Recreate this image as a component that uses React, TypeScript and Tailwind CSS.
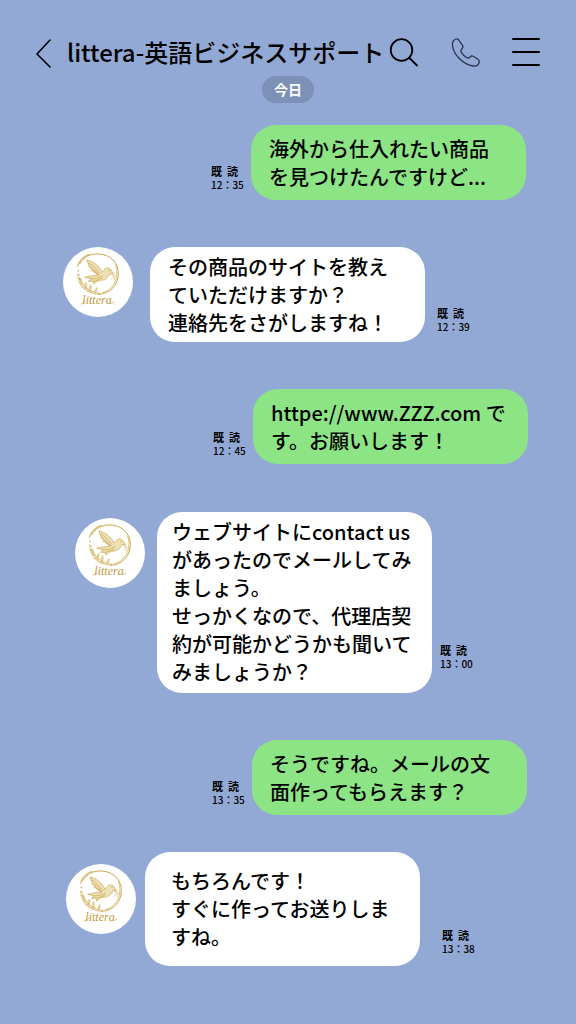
import React from 'react';

interface Message {
  text: string;
  time: string;
  mine?: boolean;
  rowClass: string;
  avatarClass?: string;
  bubbleClass: string;
  stampClass: string;
}

const messages: Message[] = [
  {
    text: '海外から仕入れたい商品\nを見つけたんですけど...',
    time: '12：35',
    mine: true,
    rowClass: 'mt-[22px] pr-[50px]',
    bubbleClass: 'px-[18px] pt-[10px] pb-[9px]',
    stampClass: 'mr-[6px] mb-[8px]',
  },
  {
    text: 'その商品のサイトを教え\nていただけますか？\n連絡先をさがしますね！',
    time: '12：39',
    rowClass: 'mt-[47px] pl-[63px]',
    avatarClass: 'mr-[17px]',
    bubbleClass: 'px-[18px] pt-[6px] pb-[5px]',
    stampClass: 'ml-[12px] mb-[8px]',
  },
  {
    text: 'httpe://www.ZZZ.com で\nす。お願いします！',
    time: '12：45',
    mine: true,
    rowClass: 'mt-[47px] pr-[48px]',
    bubbleClass: 'px-[18px] pt-[10px] pb-[9px]',
    stampClass: 'mr-[6px] mb-[6px]',
  },
  {
    text: 'ウェブサイトにcontact us\nがあったのでメールしてみ\nましょう。\nせっかくなので、代理店契\n約が可能かどうかも聞いて\nみましょうか？',
    time: '13：00',
    rowClass: 'mt-[48px] pl-[75px]',
    avatarClass: 'mr-[12px] mt-[6px]',
    bubbleClass: 'px-[15px] pt-[6px] pb-[7px]',
    stampClass: 'ml-[8px] mb-[22px]',
  },
  {
    text: 'そうですね。メールの文\n面作ってもらえます？',
    time: '13：35',
    mine: true,
    rowClass: 'mt-[47px] pr-[49px]',
    bubbleClass: 'px-[18px] pt-[10px] pb-[9px]',
    stampClass: 'mr-[6px] mb-[8px]',
  },
  {
    text: 'もちろんです！\nすぐに作ってお送りしま\nすね。',
    time: '13：38',
    rowClass: 'mt-[37px] pl-[66px]',
    avatarClass: 'mr-[9px] mt-[12px]',
    bubbleClass: 'px-[26px] pt-[15px] pb-[15px]',
    stampClass: 'ml-[22px] mb-[10px]',
  },
];

const Avatar: React.FC<{ className?: string }> = ({ className = '' }) => {
  return (
    <svg
      viewBox="0 0 210 210"
      className={`size-[70px] shrink-0 rounded-full bg-white ${className}`}
      fill="none"
      stroke="#c9a548"
      strokeLinecap="round"
      strokeLinejoin="round"
      role="img"
      aria-label="littera"
    >
      {/* Ring */}
      <path d="M50 50 C62 28 84 20 106 21 C142 22 166 47 166 80 C166 115 141 140 107 142" strokeWidth="3" />
      <path d="M158 55 C170 90 154 126 119 137" strokeWidth="3" stroke="#dcc37c" />
      <path d="M107 142 C68 140 43 113 44 80" strokeWidth="2" />
      <path d="M43 58 C49 41 62 29 77 22" strokeWidth="4" stroke="#d8bd74" />
      <path d="M46 70 v1 M48 84 v1 M51 96 v1" strokeWidth="4" />

      {/* Leaves */}
      <g fill="#e6d29a" stroke="#d4b562" strokeWidth="1">
        <path d="M55 106 C50 100 48 96 49 91 C55 95 58 100 55 106 Z" />
        <path d="M62 115 C54 113 51 110 48 104 C56 105 61 109 62 115 Z" />
        <path d="M68 121 C65 113 66 109 70 104 C74 110 73 116 68 121 Z" />
        <path d="M73 126 C64 127 59 123 56 118 C64 118 70 120 73 126 Z" />
        <path d="M81 131 C77 123 78 118 83 112 C87 119 87 125 81 131 Z" />
        <path d="M88 136 C79 138 73 135 68 130 C76 128 83 130 88 136 Z" />
        <path d="M96 138 C94 131 97 126 102 121 C105 128 102 134 96 138 Z" />
      </g>
      <path d="M49 92 C60 117 80 135 110 139" strokeWidth="2" />

      {/* Dove */}
      <path
        d="M107 84 C91 76 77 61 72 39 C90 43 109 56 117 76 C121 70 128 61 136 63 C143 64 145 70 151 79 C143 78 140 81 136 88 C130 98 120 100 107 100 L92 111 L91 103 L76 103 L86 96 L65 91 C80 86 94 87 107 84 Z"
        fill="#efe1b6"
        strokeWidth="2"
      />
      <path d="M77 48 C89 54 101 65 109 79 M77 58 C88 63 99 71 105 81 M83 70 C91 72 98 77 103 82 M86 96 C98 95 109 93 119 87 M91 103 C102 100 110 97 117 93" strokeWidth="2" />
      <path d="M138 70 v1" strokeWidth="3" />
      <path d="M141 79 C149 82 154 89 155 98 M147 83 l7 -2 M151 88 l7 -1 M149 92 l-4 5" strokeWidth="2" stroke="#d8b872" />

      {/* Wordmark */}
      <text
        x="58"
        y="170"
        className="font-['Liberation_Serif',serif] text-[36px] italic"
        fill="#bf9a3c"
        stroke="none"
      >
        littera
      </text>
      <path d="M54 171 C60 171 65 167 69 162 M142 169 C146 169 149 168 152 166" strokeWidth="2" />
    </svg>
  );
};

const Stamp: React.FC<{ time: string; className: string }> = ({ time, className }) => {
  return (
    <div className={`w-[34px] shrink-0 self-end leading-[14px] whitespace-pre ${className}`}>
      <p className="text-[11px] font-bold">{'既  読'}</p>
      <p className="text-[10px] font-medium">{time}</p>
    </div>
  );
};

const MessageRow: React.FC<{ message: Message }> = ({ message }) => {
  const { text, time, mine, rowClass, avatarClass, bubbleClass, stampClass } = message;

  return (
    <li className={`flex items-start ${mine ? 'justify-end' : ''} ${rowClass}`}>
      {mine ? <Stamp time={time} className={stampClass} /> : <Avatar className={avatarClass} />}
      <p
        className={`w-[275px] rounded-[25px] text-[20px] leading-[28px] font-medium whitespace-pre ${
          mine ? 'bg-[#8de485]' : 'bg-white'
        } ${bubbleClass}`}
      >
        {text}
      </p>
      {!mine && <Stamp time={time} className={stampClass} />}
    </li>
  );
};

export default function App() {
  return (
    <div
      lang="ja"
      className="min-h-screen bg-[#93a9d5] pb-8 font-['Noto_Sans_CJK_JP',sans-serif] text-black"
    >
      {/* Header */}
      <header className="flex items-center pt-[34px] pr-[35px] pl-[35px]">
        <button type="button" aria-label="戻る" className="shrink-0">
          <svg viewBox="0 0 18 32" className="h-[32px] w-[18px]" fill="none" stroke="currentColor" strokeWidth="1.6" strokeLinecap="round" strokeLinejoin="round">
            <path d="M15 4 L2 18 L15 31" />
          </svg>
        </button>
        <h1 className="ml-[14px] text-[24px] leading-[36px] font-medium whitespace-nowrap">
          littera-英語ビジネスサポート
        </h1>
        <div className="ml-auto flex shrink-0 items-center gap-[31px]">
          <button type="button" aria-label="検索">
            <svg viewBox="0 0 30 30" className="size-[30px]" fill="none" stroke="currentColor" strokeWidth="1.8" strokeLinecap="round">
              <circle cx="12.500" cy="13" r="10.800" />
              <path d="M20.500 21 L28 28.500" />
            </svg>
          </button>
          <button type="button" aria-label="通話">
            <svg viewBox="0 0 30 30" className="size-[30px]" fill="none" stroke="#28324a" strokeWidth="1.3" strokeLinejoin="round">
              <path d="M6 2 C7.500 1.500 8.500 2.500 9.500 4 C10.500 6 12.500 7.500 13 9.500 C13.200 11 11 12.500 10.800 14 C10.800 16 16 21 18 21 C19.500 21 20.500 18.800 22 18.800 C23.500 18.800 25 20.500 27 21.500 C28.800 22.500 29.600 23.500 29.200 25.300 C28.500 28 26 29.200 23 29 C13.500 27.700 3.500 18 2.500 8.500 C2.200 5.500 3.500 3 6 2 Z" />
            </svg>
          </button>
          <button type="button" aria-label="メニュー">
            <svg viewBox="0 0 30 30" className="size-[30px]" fill="none" stroke="currentColor" strokeWidth="2" strokeLinecap="round">
              <path d="M2 2 H28 M2 15 H28 M2 28 H28" />
            </svg>
          </button>
        </div>
      </header>

      {/* Date */}
      <p className="mx-auto mt-[6px] w-fit rounded-full bg-[#7d90b5] px-[12px] text-[14px] leading-[27px] font-bold text-white">
        今日
      </p>

      {/* Conversation */}
      <ul>
        {messages.map((message) => (
          <MessageRow key={message.time} message={message} />
        ))}
      </ul>
    </div>
  );
}
